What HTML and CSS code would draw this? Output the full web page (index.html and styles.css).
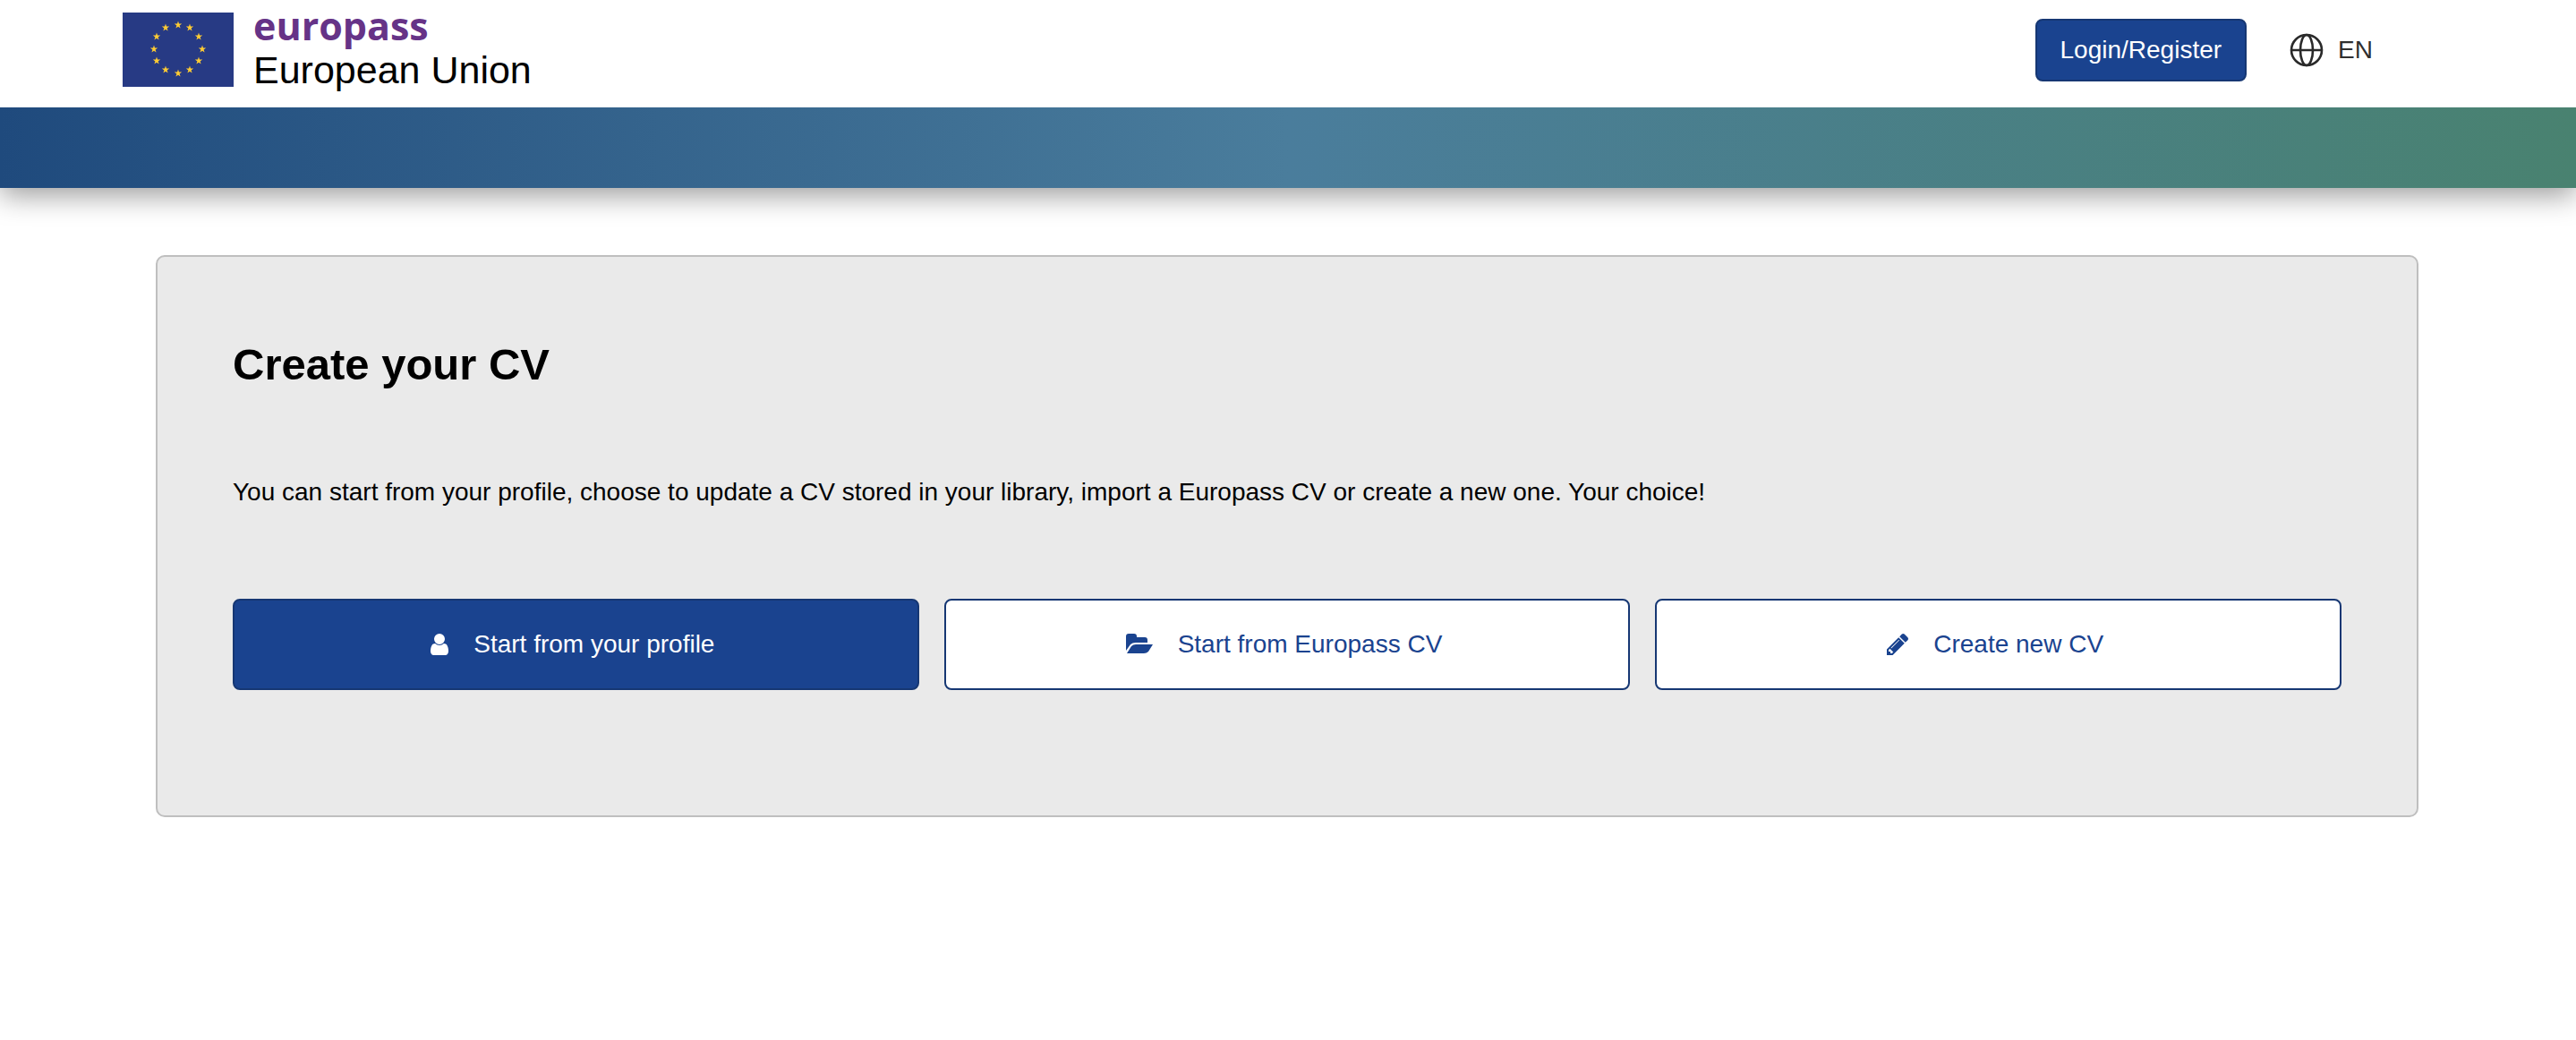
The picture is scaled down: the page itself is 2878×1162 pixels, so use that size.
FILE: index.html
```html
<!DOCTYPE html>
<html lang="en">
<head>
  <meta charset="utf-8">
  <meta name="viewport" content="width=device-width, initial-scale=1">
  <title>Create your CV | Europass</title>
  <link rel="stylesheet" href="styles.css">
</head>
<body>
  <header class="header">
    <div class="topbar">
      <a class="brand" href="#">
        <svg class="flag" viewBox="0 0 124 83" aria-hidden="true">
          <defs>
            <path id="star" d="M0-4.4 1-1.4H4.2L1.6.5 2.6 3.6 0 1.7-2.6 3.6-1.6.5-4.2-1.4H-1Z" fill="#fc3"/>
          </defs>
          <rect width="124" height="83" fill="#273a84"/>
          <use href="#star" x="62" y="14"/>
          <use href="#star" x="75" y="17"/>
          <use href="#star" x="85" y="27"/>
          <use href="#star" x="89" y="41"/>
          <use href="#star" x="85" y="54"/>
          <use href="#star" x="75" y="64"/>
          <use href="#star" x="62" y="68"/>
          <use href="#star" x="48" y="64"/>
          <use href="#star" x="38" y="54"/>
          <use href="#star" x="35" y="41"/>
          <use href="#star" x="38" y="27"/>
          <use href="#star" x="48" y="17"/>
        </svg>
        <span class="brand-text">
          <span class="brand-name">europass</span>
          <span class="brand-owner">European Union</span>
        </span>
      </a>
      <div class="actions">
        <button class="login" type="button">Login/Register</button>
        <button class="language" type="button">
          <svg class="globe" viewBox="0 0 38 38" aria-hidden="true">
            <g fill="none" stroke="#2a2a2a" stroke-width="2.600">
              <circle cx="19" cy="19" r="17"/>
              <ellipse cx="19" cy="19" rx="7" ry="17"/>
              <path d="M2 19H36"/>
            </g>
          </svg>
          EN
        </button>
      </div>
    </div>
    <div class="band"></div>
  </header>
  <main class="main">
    <section class="panel">
      <h1 class="title">Create your CV</h1>
      <p class="intro">You can start from your profile, choose to update a CV stored in your library, import a Europass CV or create a new one. Your choice!</p>
      <div class="choices">
        <button class="choice choice-primary" type="button">
          <svg class="icon-user" viewBox="0 128 1280 1536" aria-hidden="true"><path fill="currentColor" d="M1280 1399q0 109-62.500 187t-150.500 78h-854q-88 0-150.500-78t-62.500-187q0-85 8.500-160.500t31.500-152 58.500-131 94-89 134.500-34.500q131 128 313 128t313-128q76 0 134.500 34.500t94 89 58.500 131 31.500 152 8.500 160.500zm-256-887q0 159-112.500 271.500t-271.500 112.500-271.500-112.500-112.500-271.500 112.500-271.500 271.500-112.500 271.500 112.500 112.500 271.500z"/></svg>
          Start from your profile
        </button>
        <button class="choice" type="button">
          <svg class="icon-folder" viewBox="0 0 30 24" aria-hidden="true"><path fill="currentColor" d="M0 19V3Q0 0 3 0H9Q12 0 12 3V4H21Q24 4 24 7V10H11Q7 10 5 12ZM1 22 6 14Q8 12 11 12H30L25 20Q23 22 20 22Z"/></svg>
          Start from Europass CV
        </button>
        <button class="choice" type="button">
          <svg class="icon-pencil" viewBox="0 149 1515 1515" aria-hidden="true"><path fill="currentColor" d="M363 1536l91-91-235-235-91 91v107h128v128h107zm523-928q0-22-22-22-10 0-17 7l-542 542q-7 7-7 17 0 22 22 22 10 0 17-7l542-542q7-7 7-17zm-54-192l416 416-832 832h-416v-416zm683 96q0 53-37 90l-166 166-416-416 166-165q36-38 90-38 53 0 91 38l235 234q37 39 37 91z"/></svg>
          Create new CV
        </button>
      </div>
    </section>
  </main>
</body>
</html>
```

FILE: styles.css
```css
* {
  box-sizing: border-box;
}

body {
  margin: 0;
  background: #fff;
  color: #000;
  font: 28px/42px "Liberation Sans", Arial, sans-serif;
}

button {
  border: 0;
  background: none;
  font: inherit;
  cursor: pointer;
}

/* Sits above the band so that the band's shadow only falls downwards */
.topbar {
  position: relative;
  z-index: 1;
  display: flex;
  justify-content: space-between;
  align-items: flex-start;
  height: 120px;
  padding: 0 227px 0 137px;
  background: #fff;
}

.brand {
  display: flex;
  gap: 22px;
  color: #000;
  text-decoration: none;
}

.flag {
  width: 124px;
  height: 83px;
  margin-top: 14px;
}

.brand-text {
  display: flex;
  flex-direction: column;
}

.brand-name {
  color: #663387;
  font: 700 43px/58px "Open Sans", "Noto Sans", sans-serif;
}

.brand-owner {
  font-size: 43px;
  line-height: 40px;
}

.actions {
  display: flex;
  align-items: center;
  gap: 48px;
  padding-top: 21px;
}

.login {
  height: 70px;
  padding: 0 26px;
  border: 2px solid #163773;
  border-radius: 8px;
  background: #1a438f;
  color: #fff;
}

.language {
  display: flex;
  align-items: center;
  gap: 16px;
  padding: 0;
  color: #2f2f2f;
}

.globe {
  width: 38px;
  height: 38px;
}

.band {
  height: 90px;
  background: linear-gradient(90deg, #1f4a7d, #4a7d9c 50%, #498270);
  box-shadow: 0 8px 32px rgba(0, 0, 0, 0.4);
}

.main {
  padding: 75px 176px 75px 174px;
}

.panel {
  padding: 84px 84px 140px;
  border: 2px solid #bfbfbf;
  border-radius: 10px;
  background: #eaeaea;
}

.title {
  margin: 0;
  font-size: 49px;
  line-height: 72px;
}

.intro {
  margin: 86px 0 98px;
}

.choices {
  display: grid;
  grid-template-columns: repeat(3, 1fr);
  gap: 28px;
}

.choice {
  display: flex;
  justify-content: center;
  align-items: center;
  gap: 28px;
  height: 102px;
  padding: 0 7px 0 0;
  border: 2px solid #163773;
  border-radius: 8px;
  background: #fff;
  color: #1a438f;
}

.choice-primary {
  background: #1a438f;
  color: #fff;
}

.icon-user {
  width: 20px;
  height: 24px;
}

.icon-folder {
  width: 30px;
  height: 24px;
}

.icon-pencil {
  width: 24px;
  height: 24px;
}
```
